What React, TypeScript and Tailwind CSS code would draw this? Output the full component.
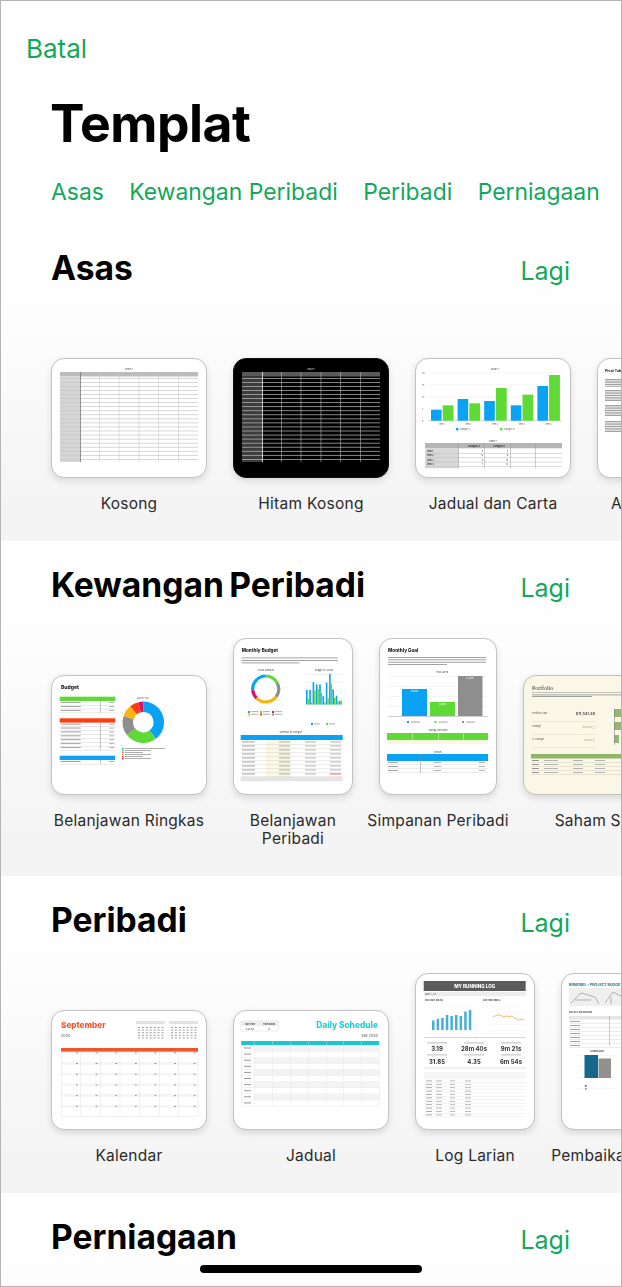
import type { ReactNode } from 'react'

const BLUE = '#0aa2f5'
const GREEN = '#5fd935'
const GRAY = '#8e8e8e'
const RED = '#ff3b14'

const range = (n: number) => Array.from({ length: n }, (_, i) => i)

function Thumb({ w, h, dark, cream, children }: { w: number; h: number; dark?: boolean; cream?: boolean; children: ReactNode }) {
  const bg = dark ? 'bg-black border-[#111]' : cream ? 'bg-[#fbf7e6] border-[#c2c1b9]' : 'bg-white border-[#c2c2c2]'
  return (
    <div
      className={`shrink-0 overflow-hidden rounded-[13px] border-[1.5px] shadow-[0_3px_7px_rgba(0,0,0,0.12)] ${bg}`}
      style={{ width: w, height: h }}
    >
      <svg viewBox={`0 0 ${w} ${h}`} width={w} height={h} className="blur-[0.45px] -m-[1.5px] block" fontFamily="Inter, sans-serif">
        {children}
      </svg>
    </div>
  )
}

function BlankSheet({ dark }: { dark?: boolean }) {
  const line = dark ? '#bdbdbd' : '#c6c6c6'
  const cols = [29, 48.3, 67.7, 87.7, 107.3, 127.3]
  return (
    <>
      <text x="78" y="12" fontSize="2.5" textAnchor="middle" fill={dark ? '#ccc' : '#555'}>Table 1</text>
      <rect x="9" y="14" width="138" height="4.5" fill={dark ? '#5a5a5a' : '#bcbcbc'} />
      <rect x="9" y="18.5" width="20" height="85.5" fill={dark ? '#3d3d3d' : '#d6d6d6'} />
      {range(21).map((i) => (
        <rect key={i} x="9" y={20 + i * 4.05} width="138" height="0.7" fill={line} />
      ))}
      {cols.map((x, i) => (
        <rect key={x} x={x} y="14" width={i === 0 ? 0.8 : 0.55} height="90" fill={i === 0 ? (dark ? '#eee' : '#777') : line} />
      ))}
    </>
  )
}

function ChartSheet() {
  const blue = [179, 147, 153, 166, 108]
  const green = [166, 160, 114, 134, 75]
  return (
    <>
      <text x="80" y="12" fontSize="2.6" textAnchor="middle" fill="#444">Chart 1</text>
      {[14.7, 26.7, 38.7, 50.7].map((y) => (
        <rect key={y} x="13" y={y} width="134" height="0.4" fill="#e6e6e6" />
      ))}
      <rect x="13" y="62.5" width="134" height="0.6" fill="#bbb" />
      {['20', '15', '10', '5', '0'].map((t, i) => (
        <text key={t} x="7" y={15.5 + i * 12} fontSize="2.2" fill="#555">{t}</text>
      ))}
      {range(5).map((i) => (
        <g key={i}>
          <rect x={16 + i * 26.6} y={(blue[i] - 24) / 3} width="10.6" height={62.7 - (blue[i] - 24) / 3} fill={BLUE} />
          <rect x={27.7 + i * 26.6} y={(green[i] - 24) / 3} width="10.8" height={62.7 - (green[i] - 24) / 3} fill={GREEN} />
          <text x={27 + i * 26.6} y="66.5" fontSize="2" textAnchor="middle" fill="#555">Item {i + 1}</text>
        </g>
      ))}
      <rect x="41" y="70" width="2.4" height="2.4" fill={BLUE} />
      <text x="45" y="72" fontSize="2" fill="#555">Category A</text>
      <rect x="85" y="70" width="2.4" height="2.4" fill={GREEN} />
      <text x="89" y="72" fontSize="2" fill="#555">Category B</text>
      <text x="78" y="83.5" fontSize="2.6" textAnchor="middle" fill="#444">Table 1</text>
      <rect x="10" y="85" width="137" height="5.3" fill="#b5b5b5" />
      <rect x="10" y="90.3" width="33.5" height="20" fill="#d8d8d8" />
      <text x="53" y="89" fontSize="2.2" fontWeight="700" fill="#333">Category A</text>
      <text x="78" y="89" fontSize="2.2" fontWeight="700" fill="#333">Category B</text>
      {[0, 1, 2, 3].map((i) => (
        <g key={i}>
          <text x="12" y={94 + i * 4.4} fontSize="2.2" fontWeight="700" fill="#333">Item {i + 1}</text>
          <text x="68" y={94 + i * 4.4} fontSize="2.2" textAnchor="end" fill="#333">{[5, 12, 9, 7][i]}</text>
          <text x="93" y={94 + i * 4.4} fontSize="2.2" textAnchor="end" fill="#333">{[7, 8, 15, 12][i]}</text>
          <rect x="10" y={95 + i * 4.4} width="137" height="0.5" fill="#bbb" />
        </g>
      ))}
      {[43.5, 69, 95, 120.5].map((x) => (
        <rect key={x} x={x} y="85" width="0.5" height="25.5" fill="#999" />
      ))}
    </>
  )
}

function TextLines({ x, y, w, rows, step = 1.7 }: { x: number; y: number; w: number; rows: number; step?: number }) {
  return (
    <>
      {range(rows).map((i) => (
        <rect key={i} x={x} y={y + i * step} width={i === rows - 1 ? w * 0.6 : w} height="0.8" fill="#8a8a8a" />
      ))}
    </>
  )
}

function PivotSheet() {
  return (
    <>
      <text x="8" y="14" fontSize="3.6" fontWeight="700" fill="#222">Pivot Table Basics</text>
      <TextLines x={8} y={21} w={60} rows={5} />
      <TextLines x={8} y={32} w={60} rows={7} />
      <TextLines x={8} y={47} w={60} rows={7} />
      <TextLines x={8} y={63} w={60} rows={7} />
    </>
  )
}

function MiniTable({ x, y, w, head, rows, step = 3.9, split }: { x: number; y: number; w: number; head: string; rows: number; step?: number; split: number }) {
  return (
    <>
      <rect x={x} y={y} width={w} height="4.3" fill={head} />
      {range(rows).map((i) => (
        <g key={i}>
          <rect x={x + 1} y={y + 5.4 + i * step} width="20" height="0.9" fill="#999" />
          <rect x={x + w - 6} y={y + 5.4 + i * step} width="5" height="0.9" fill="#aaa" />
          <rect x={x} y={y + 4.3 + (i + 1) * step} width={w} height="0.4" fill="#c4c4c4" />
        </g>
      ))}
      <rect x={split} y={y + 4.3} width="0.5" height={rows * step} fill="#888" />
    </>
  )
}

function Arc({ cx, cy, r, from, to, color, sw }: { cx: number; cy: number; r: number; from: number; to: number; color: string; sw: number }) {
  const pt = (d: number) => {
    const a = ((d - 90) * Math.PI) / 180
    return `${(cx + r * Math.cos(a)).toFixed(2)} ${(cy + r * Math.sin(a)).toFixed(2)}`
  }
  return <path d={`M${pt(from)} A${r} ${r} 0 ${to - from > 180 ? 1 : 0} 1 ${pt(to)}`} fill="none" stroke={color} strokeWidth={sw} />
}

function BudgetSheet() {
  const legend = [BLUE, GREEN, GRAY, '#f8b50f', RED, '#d6136e']
  return (
    <>
      <text x="10" y="14" fontSize="5" fontWeight="800" fill="#222">Budget</text>
      <MiniTable x={8.7} y={21.7} w={55.5} head={GREEN} rows={3} split={49} />
      <MiniTable x={8.7} y={43.3} w={55.5} head={RED} rows={7} step={3.9} split={49} />
      <MiniTable x={8.7} y={80.7} w={55.5} head={BLUE} rows={1} split={49} />
      <text x="92" y="24" fontSize="2.2" textAnchor="middle" fill="#555">Money Out</text>
      <Arc cx={92.3} cy={47.3} r={15.5} from={0} to={143} color={BLUE} sw={10.5} />
      <Arc cx={92.3} cy={47.3} r={15.5} from={143} to={232} color={GREEN} sw={10.5} />
      <Arc cx={92.3} cy={47.3} r={15.5} from={232} to={288} color={GRAY} sw={10.5} />
      <Arc cx={92.3} cy={47.3} r={15.5} from={288} to={321} color="#f8b50f" sw={10.5} />
      <Arc cx={92.3} cy={47.3} r={15.5} from={321} to={346} color={RED} sw={10.5} />
      <Arc cx={92.3} cy={47.3} r={15.5} from={346} to={360} color="#d6136e" sw={10.5} />
      {legend.map((c, i) => (
        <g key={c}>
          <rect x="71" y={72.8 + i * 2} width="1.6" height="1.6" fill={c} />
          <rect x="74" y={73.1 + i * 2} width={i === 0 ? 40 : 18 + (i % 2) * 8} height="0.8" fill="#999" />
        </g>
      ))}
    </>
  )
}

function MonthlyBudgetSheet() {
  const bars = [[35, 14], [35, 5], [53, 33], [48, 37], [48, 27], [20, 5], [52, 14], [73, 49], [36, 16], [21, 8], [8, 10]]
  return (
    <>
      <text x="8.7" y="14" fontSize="4.6" fontWeight="800" fill="#222">Monthly Budget</text>
      <TextLines x={8.7} y={19.5} w={96} rows={3} step={2.5} />
      <text x="33" y="33" fontSize="2.2" textAnchor="middle" fill="#444">Actual Summary</text>
      <text x="91" y="33" fontSize="2.2" textAnchor="middle" fill="#444">Budget vs. Actual</text>
      <Arc cx={32.7} cy={51} r={13} from={0} to={62} color={GREEN} sw={3.2} />
      <Arc cx={32.7} cy={51} r={13} from={62} to={128} color={GRAY} sw={3.2} />
      <Arc cx={32.7} cy={51} r={13} from={128} to={225} color="#f8b50f" sw={3.2} />
      <Arc cx={32.7} cy={51} r={13} from={225} to={265} color="#d6136e" sw={3.2} />
      <Arc cx={32.7} cy={51} r={13} from={265} to={360} color={BLUE} sw={3.2} />
      {[36, 44, 52, 60, 66.5].map((y) => (
        <rect key={y} x="73" y={y} width="37" height="0.4" fill="#ddd" />
      ))}
      {bars.map(([b, g], i) => (
        <g key={i}>
          <rect x={73 + i * 3.3} y={66.5 - b * 0.42} width="1.6" height={b * 0.42} fill={BLUE} />
          <rect x={74.6 + i * 3.3} y={66.5 - g * 0.42} width="1.4" height={g * 0.42} fill={GREEN} />
        </g>
      ))}
      {[0, 1, 2].map((i) => (
        <g key={i}>
          <rect x={15 + i * 12} y="73" width="2" height="2" fill={[BLUE, GREEN, '#d6136e'][i]} />
          <rect x={18 + i * 12} y="73.3" width="7" height="0.8" fill="#999" />
          <rect x={15 + i * 12} y="75.5" width="2" height="2" fill={['#f8b50f', RED, GRAY][i]} />
          <rect x={18 + i * 12} y="75.8" width="7" height="0.8" fill="#999" />
        </g>
      ))}
      <rect x="78" y="85" width="2" height="2" fill={BLUE} />
      <rect x="81" y="85.5" width="6" height="0.8" fill="#999" />
      <rect x="93" y="85" width="2" height="2" fill={GREEN} />
      <rect x="96" y="85.5" width="6" height="0.8" fill="#999" />
      <text x="58" y="94.5" fontSize="2.2" textAnchor="middle" fill="#444">Summary by Category</text>
      <rect x="7.7" y="97" width="102" height="5" fill={BLUE} />
      <rect x="32.7" y="102" width="25.7" height="37" fill="#fbf7e2" />
      {range(9).map((i) => (
        <g key={i}>
          <rect x="9" y={103.5 + i * 4} width="13" height="0.9" fill="#999" />
          <rect x="46" y={103.5 + i * 4} width="11" height="0.9" fill="#aaa" />
          <rect x="72" y={103.5 + i * 4} width="11" height="0.9" fill="#aaa" />
          <rect x="97" y={103.5 + i * 4} width="11" height="0.9" fill={i === 8 ? '#e55' : '#aaa'} />
          <rect x="7.7" y={106 + i * 4} width="102" height="0.4" fill="#d0d0d0" />
        </g>
      ))}
      <rect x="7.7" y="139" width="102" height="4.2" fill="#e4e4e4" />
    </>
  )
}

function GoalSheet() {
  return (
    <>
      <text x="9" y="14" fontSize="4.6" fontWeight="800" fill="#222">Monthly Goal</text>
      <TextLines x={9} y={19} w={98} rows={4} step={2.4} />
      <text x="63" y="35" fontSize="2.2" textAnchor="middle" fill="#444">Total Saved</text>
      {[38, 48, 58, 68].map((y) => (
        <rect key={y} x="9" y={y} width="99" height="0.4" fill="#e2e2e2" />
      ))}
      <rect x="9" y="78" width="100" height="0.6" fill="#aaa" />
      <rect x="23" y="51" width="25" height="27" fill={BLUE} />
      <rect x="51" y="64" width="25" height="14" fill={GREEN} />
      <rect x="79" y="38" width="24.5" height="40" fill={GRAY} />
      <text x="35.5" y="54" fontSize="2" textAnchor="middle" fill="#fff">$15,000</text>
      <text x="63.5" y="67" fontSize="2" textAnchor="middle" fill="#fff">$8,000</text>
      <text x="91" y="41" fontSize="2" textAnchor="middle" fill="#fff">$21,000</text>
      {[0, 1, 2].map((i) => (
        <g key={i}>
          <rect x={28 + i * 27.5} y="83" width="2" height="2" fill={[BLUE, GREEN, GRAY][i]} />
          <rect x={32 + i * 27.5} y="83.6" width="9" height="0.9" fill="#999" />
        </g>
      ))}
      <text x="59" y="92.5" fontSize="2.2" textAnchor="middle" fill="#444">Savings Calculator</text>
      <rect x="8" y="95" width="101" height="7" fill={GREEN} />
      {[33, 59, 84].map((x) => (
        <rect key={x} x={x} y="95" width="0.4" height="11" fill="#fff" />
      ))}
      <rect x="8" y="102" width="101" height="4" fill="#fbf6e2" />
      <text x="59" y="114.5" fontSize="2.2" textAnchor="middle" fill="#444">Results</text>
      <rect x="8" y="116" width="101" height="7" fill={BLUE} />
      {[0, 1, 2].map((i) => (
        <g key={i}>
          <rect x="9" y={124.2 + i * 3.9} width="10" height="0.9" fill="#999" />
          <rect x="55" y={124.2 + i * 3.9} width="7" height="0.9" fill="#aaa" />
          <rect x="100" y={124.2 + i * 3.9} width="6" height="0.9" fill="#aaa" />
          <rect x="8" y={126.6 + i * 3.9} width="101" height="0.4" fill="#cfcfcf" />
        </g>
      ))}
      <rect x="41" y="116" width="0.5" height="19" fill="#888" />
    </>
  )
}

function PortfolioSheet() {
  return (
    <>
      <text x="9" y="15" fontSize="6" fontFamily="Liberation Serif, serif" fill="#333">Portfolio</text>
      <rect x="9" y="17" width="140" height="0.5" fill="#888" />
      <TextLines x={9} y={19.5} w={100} rows={2} />
      {['Portfolio Gain', 'Change', '% Change'].map((t, i) => (
        <g key={t}>
          <text x="9" y={39 + i * 13} fontSize="2.4" fill="#555">{t}</text>
          <rect x="9" y={46 + i * 13} width="64" height="0.4" fill="#d5d2bd" />
        </g>
      ))}
      <text x="72" y="40" fontSize="3.8" fontWeight="600" textAnchor="end" fill="#444">$11,541.30</text>
      <text x="72" y="53" fontSize="2.6" textAnchor="end" fill="#7aa85a">$105.34 ↕</text>
      <text x="72" y="66" fontSize="2.6" textAnchor="end" fill="#7aa85a">0.95% ↕</text>
      <rect x="91" y="34" width="12" height="8" fill="#93b778" />
      <rect x="91" y="47" width="12" height="8" fill="#93b778" />
      <rect x="91" y="60" width="5" height="8" fill="#93b778" />
      <rect x="91" y="34" width="0.5" height="36" fill="#777" />
      <rect x="8" y="79" width="148" height="4.5" fill="#8fb56a" />
      {range(4).map((i) => (
        <g key={i}>
          <rect x="9" y={85 + i * 4} width="7" height="0.9" fill="#888" />
          <rect x="21" y={85 + i * 4} width="14" height="0.9" fill="#aaa" />
          <rect x="50" y={85 + i * 4} width="10" height="0.9" fill="#aaa" />
          <rect x="72" y={85 + i * 4} width="10" height="0.9" fill="#aaa" />
          <rect x="8" y={87.4 + i * 4} width="148" height="0.4" fill="#c9c6b0" />
        </g>
      ))}
    </>
  )
}

function CalendarSheet() {
  const cols = range(7)
  return (
    <>
      <text x="10" y="18" fontSize="8.2" fontWeight="800" fill="#f2552c">September</text>
      <text x="10" y="27" fontSize="3.8" fill="#555">2020</text>
      {[85, 118].map((x) => (
        <g key={x}>
          <rect x={x} y="11" width="29" height="3.2" fill="#e3e3e3" />
          {range(5).map((r) =>
            cols.map((c) => <rect key={c} x={x + 2 + c * 3.9} y={17 + r * 2.6} width="2" height="1" fill="#999" />),
          )}
        </g>
      ))}
      <rect x="10" y="38" width="137" height="3.8" fill="#f2552c" />
      {range(6).map((r) => (
        <g key={r}>
          <rect x="10" y={41.8 + r * 10.7} width="137" height="2.4" fill="#f6f6f6" />
          <rect x="10" y={41.8 + (r + 1) * 10.7} width="137" height="0.4" fill="#d8d8d8" />
          {cols.map((c) => (
            <rect key={c} x={25 + c * 19.6} y={42.3 + r * 10.7} width="2" height="1" fill="#999" />
          ))}
        </g>
      ))}
      {cols.map((c) => (
        <rect key={c} x={10 + c * 19.6} y="41.8" width="0.4" height="64" fill="#dcdcdc" />
      ))}
      <rect x="146.8" y="41.8" width="0.4" height="64" fill="#dcdcdc" />
    </>
  )
}

function ScheduleSheet() {
  return (
    <>
      <rect x="8" y="11" width="37" height="10" fill="none" stroke="#ccc" strokeWidth="0.4" />
      <rect x="8" y="11" width="37" height="5" fill="#eee" />
      <text x="17" y="15" fontSize="2" fontWeight="700" textAnchor="middle" fill="#444">Start Time</text>
      <text x="36" y="15" fontSize="2" fontWeight="700" textAnchor="middle" fill="#444">Time Blocks</text>
      <text x="17" y="19.5" fontSize="2" textAnchor="middle" fill="#444">8:00 AM</text>
      <text x="36" y="19.5" fontSize="2" textAnchor="middle" fill="#444">15</text>
      <text x="145" y="18" fontSize="8.4" fontWeight="800" textAnchor="end" fill="#26cdd3">Daily Schedule</text>
      <text x="145" y="27" fontSize="3.8" textAnchor="end" fill="#555">Fall 2020</text>
      <rect x="8" y="31" width="138" height="4" fill="#19c8cf" />
      {range(10).map((r) => (
        <g key={r}>
          {r % 2 === 0 ? <rect x="21" y={35 + r * 6.1} width="125" height="6.1" fill="#f3f3f3" /> : null}
          <rect x="11" y={37.5 + r * 6.1} width="7" height="1" fill="#999" />
          <rect x="8" y={41 + r * 6.1} width="138" height="0.35" fill="#e0e0e0" />
        </g>
      ))}
      {[21, 39, 57, 75, 93, 110, 128, 146].map((x) => (
        <rect key={x} x={x} y="31" width="0.4" height="65" fill="#e0e0e0" />
      ))}
      <rect x="8" y="31" width="0.4" height="65" fill="#dcdcdc" />
    </>
  )
}

function RunningSheet() {
  const heights = [9.5, 11, 12, 15, 14, 15, 14, 18.5, 20]
  const trend = '78,44 80,43 83,42 86,42 88,44 91,43 94,43.5 97,43 100,45 103,47 106,46.5 109,47'
  return (
    <>
      <rect x="8.7" y="8" width="102" height="10" fill="#5c5c5c" />
      <text x="59.7" y="15" fontSize="4.6" fontWeight="800" textAnchor="middle" fill="#fff">MY RUNNING LOG</text>
      <rect x="8.7" y="19" width="102" height="4" fill="#ededed" />
      <text x="10" y="22" fontSize="2.2" fill="#444">April 1 – 22</text>
      <text x="10" y="28" fontSize="2" fontWeight="700" fill="#444">DISTANCE (MILES)</text>
      <text x="68" y="28" fontSize="2" fontWeight="700" fill="#444">RUN TIME (MM:S)</text>
      {[33, 39, 45, 51, 57].map((y) => (
        <g key={y}>
          <rect x="16" y={y} width="44" height="0.3" fill="#e6e6e6" />
          <rect x="76" y={y} width="34" height="0.3" fill="#e6e6e6" />
        </g>
      ))}
      {heights.map((h, i) => (
        <rect key={i} x={17 + i * 4.6} y={57 - h} width="2.5" height={h} fill="#46aedb" />
      ))}
      <polyline points={trend} fill="none" stroke="#f0a95c" strokeWidth="0.8" />
      <rect x="8.7" y="64" width="102" height="0.6" fill="#bbb" />
      {[
        ['3.19', 22],
        ['28m 40s', 59],
        ['9m 21s', 96],
      ].map(([t, x]) => (
        <text key={t} x={x} y="78" fontSize="6" fontWeight="700" textAnchor="middle" fill="#333">{t}</text>
      ))}
      {[
        ['31.85', 22],
        ['4.35', 59],
        ['6m 54s', 96],
      ].map(([t, x]) => (
        <text key={t} x={x} y="91" fontSize="6" fontWeight="700" textAnchor="middle" fill="#333">{t}</text>
      ))}
      {[22, 59, 96].map((x) => (
        <g key={x}>
          <rect x={x - 10} y="69.5" width="20" height="0.8" fill="#aaa" />
          <rect x={x - 10} y="81.5" width="20" height="0.8" fill="#aaa" />
        </g>
      ))}
      <rect x="8.7" y="94" width="102" height="2" fill="#eee" />
      <rect x="8.7" y="99" width="102" height="7" fill="#f6f6f6" />
      {range(11).map((i) => (
        <g key={i}>
          <rect x="11" y={107.5 + i * 3.4} width="6" height="0.8" fill="#999" />
          <rect x="21" y={107.5 + i * 3.4} width="6" height="0.8" fill="#aaa" />
          <rect x="35" y={107.5 + i * 3.4} width="5" height="0.8" fill="#aaa" />
          <rect x="50" y={107.5 + i * 3.4} width="6" height="0.8" fill="#aaa" />
          <rect x="8.7" y={109.6 + i * 3.4} width="102" height="0.3" fill="#d8d8d8" />
        </g>
      ))}
    </>
  )
}

function RemodelSheet() {
  return (
    <>
      <text x="8" y="13" fontSize="3.6" fontWeight="800" fill="#2d7f9a">REMODEL - PROJECT BUDGET</text>
      <rect x="8" y="15" width="100" height="18" fill="#efefef" />
      <path d="M10 30 L20 20 L34 24 L38 31 M14 27 L30 27 M44 30 L52 19 L62 24 M50 24 L50 31" fill="none" stroke="#999" strokeWidth="0.7" />
      <text x="8" y="40" fontSize="2" fontWeight="700" fill="#444">PROJECT BREAKDOWN</text>
      <rect x="8" y="43" width="100" height="3.6" fill="#e6e6e6" />
      {range(7).map((i) => (
        <g key={i}>
          <rect x="9" y={48 + i * 4} width="10" height="0.9" fill="#999" />
          <rect x="8" y={50 + i * 4} width="100" height="0.4" fill="#d0d0d0" />
        </g>
      ))}
      <rect x="48" y="43" width="0.5" height="30" fill="#999" />
      <text x="36" y="79" fontSize="2" fontWeight="700" textAnchor="middle" fill="#444">COMPARISON</text>
      {[82, 93, 104, 115].map((y) => (
        <rect key={y} x="14" y={y} width="40" height="0.3" fill="#ddd" />
      ))}
      <rect x="23.5" y="82" width="13.5" height="23" fill="#15688c" />
      <rect x="37.5" y="85.5" width="12.5" height="19.5" fill="#94908c" />
      <rect x="24" y="112" width="1.6" height="1.6" fill="#15688c" />
      <rect x="24" y="115" width="1.6" height="1.6" fill="#94908c" />
    </>
  )
}

interface Tpl {
  name: ReactNode
  w: number
  h: number
  dark?: boolean
  cream?: boolean
  sheet?: ReactNode
}

const SECTIONS: { title: string; items: Tpl[] }[] = [
  {
    title: 'Asas',
    items: [
      { name: 'Kosong', w: 156, h: 120, sheet: <BlankSheet /> },
      { name: 'Hitam Kosong', w: 156, h: 120, dark: true, sheet: <BlankSheet dark /> },
      { name: 'Jadual dan Carta', w: 156, h: 120, sheet: <ChartSheet /> },
      { name: 'Asas Pangsi', w: 120, h: 120, sheet: <PivotSheet /> },
    ],
  },
  {
    title: 'Kewangan Peribadi',
    items: [
      { name: 'Belanjawan Ringkas', w: 156, h: 120, sheet: <BudgetSheet /> },
      { name: <>Belanjawan<br />Peribadi</>, w: 120, h: 157, sheet: <MonthlyBudgetSheet /> },
      { name: 'Simpanan Peribadi', w: 118, h: 157, sheet: <GoalSheet /> },
      { name: 'Saham Saya', w: 156, h: 120, cream: true, sheet: <PortfolioSheet /> },
    ],
  },
  {
    title: 'Peribadi',
    items: [
      { name: 'Kalendar', w: 156, h: 120, sheet: <CalendarSheet /> },
      { name: 'Jadual', w: 156, h: 120, sheet: <ScheduleSheet /> },
      { name: 'Log Larian', w: 120, h: 157, sheet: <RunningSheet /> },
      { name: 'Pembaikan Rumah', w: 120, h: 157, sheet: <RemodelSheet /> },
    ],
  },
]

function SectionHead({ title }: { title: string }) {
  return (
    <div className="flex items-center justify-between pl-[50px] pr-[51px]">
      <h2 className="text-[33.6px] leading-[40px] font-bold text-black [word-spacing:-2.5px]">{title}</h2>
      <span className="relative top-[3px] text-[25px] leading-[32px] text-[#12a85a]">Lagi</span>
    </div>
  )
}

export default function App() {
  return (
    <div className="relative h-[1287px] w-[622px] overflow-hidden border border-[#b4b4b4] bg-white font-['Inter',sans-serif]">
      <div className="pl-[25px] pt-[32px] text-[26px] leading-[32px] text-[#12a85a]">Batal</div>
      <h1 className="ml-[49px] mt-[22px] text-[51.7px] leading-[72px] font-bold text-black tracking-[-0.5px]">Templat</h1>
      <nav className="ml-[50px] mt-[15px] mb-[14px] flex gap-[25.5px] text-[22.9px] leading-[36px] whitespace-nowrap text-[#12a85a]">
        <span>Asas</span>
        <span>Kewangan Peribadi</span>
        <span>Peribadi</span>
        <span>Perniagaan</span>
      </nav>
      {SECTIONS.map((s) => (
        <section key={s.title} className="bg-gradient-to-b from-white from-[15%] to-[#f4f4f4] to-[90%] pt-[24px] pb-[28px]">
          <SectionHead title={s.title} />
          <div className="mt-[33px] flex gap-[26px] overflow-hidden pl-[50px]">
            {s.items.map((t, i) => (
              <div key={i} className="flex shrink-0 flex-col items-center" style={{ width: t.w }}>
                <div className="flex h-[157px] items-end">
                  <Thumb w={t.w} h={t.h} dark={t.dark} cream={t.cream}>
                    {t.sheet}
                  </Thumb>
                </div>
                <div className="mt-[17px] text-center text-[15.5px] leading-[18px] tracking-[0.25px] whitespace-nowrap text-[#2a2a2a]">
                  {t.name}
                </div>
              </div>
            ))}
          </div>
        </section>
      ))}
      <section className="h-[100px] bg-gradient-to-b from-white from-[50%] to-[#fbfbfb] pt-[24px]">
        <SectionHead title="Perniagaan" />
      </section>
      <div className="absolute bottom-[13px] left-[199px] h-[8px] w-[222px] rounded-full bg-black" />
    </div>
  )
}
